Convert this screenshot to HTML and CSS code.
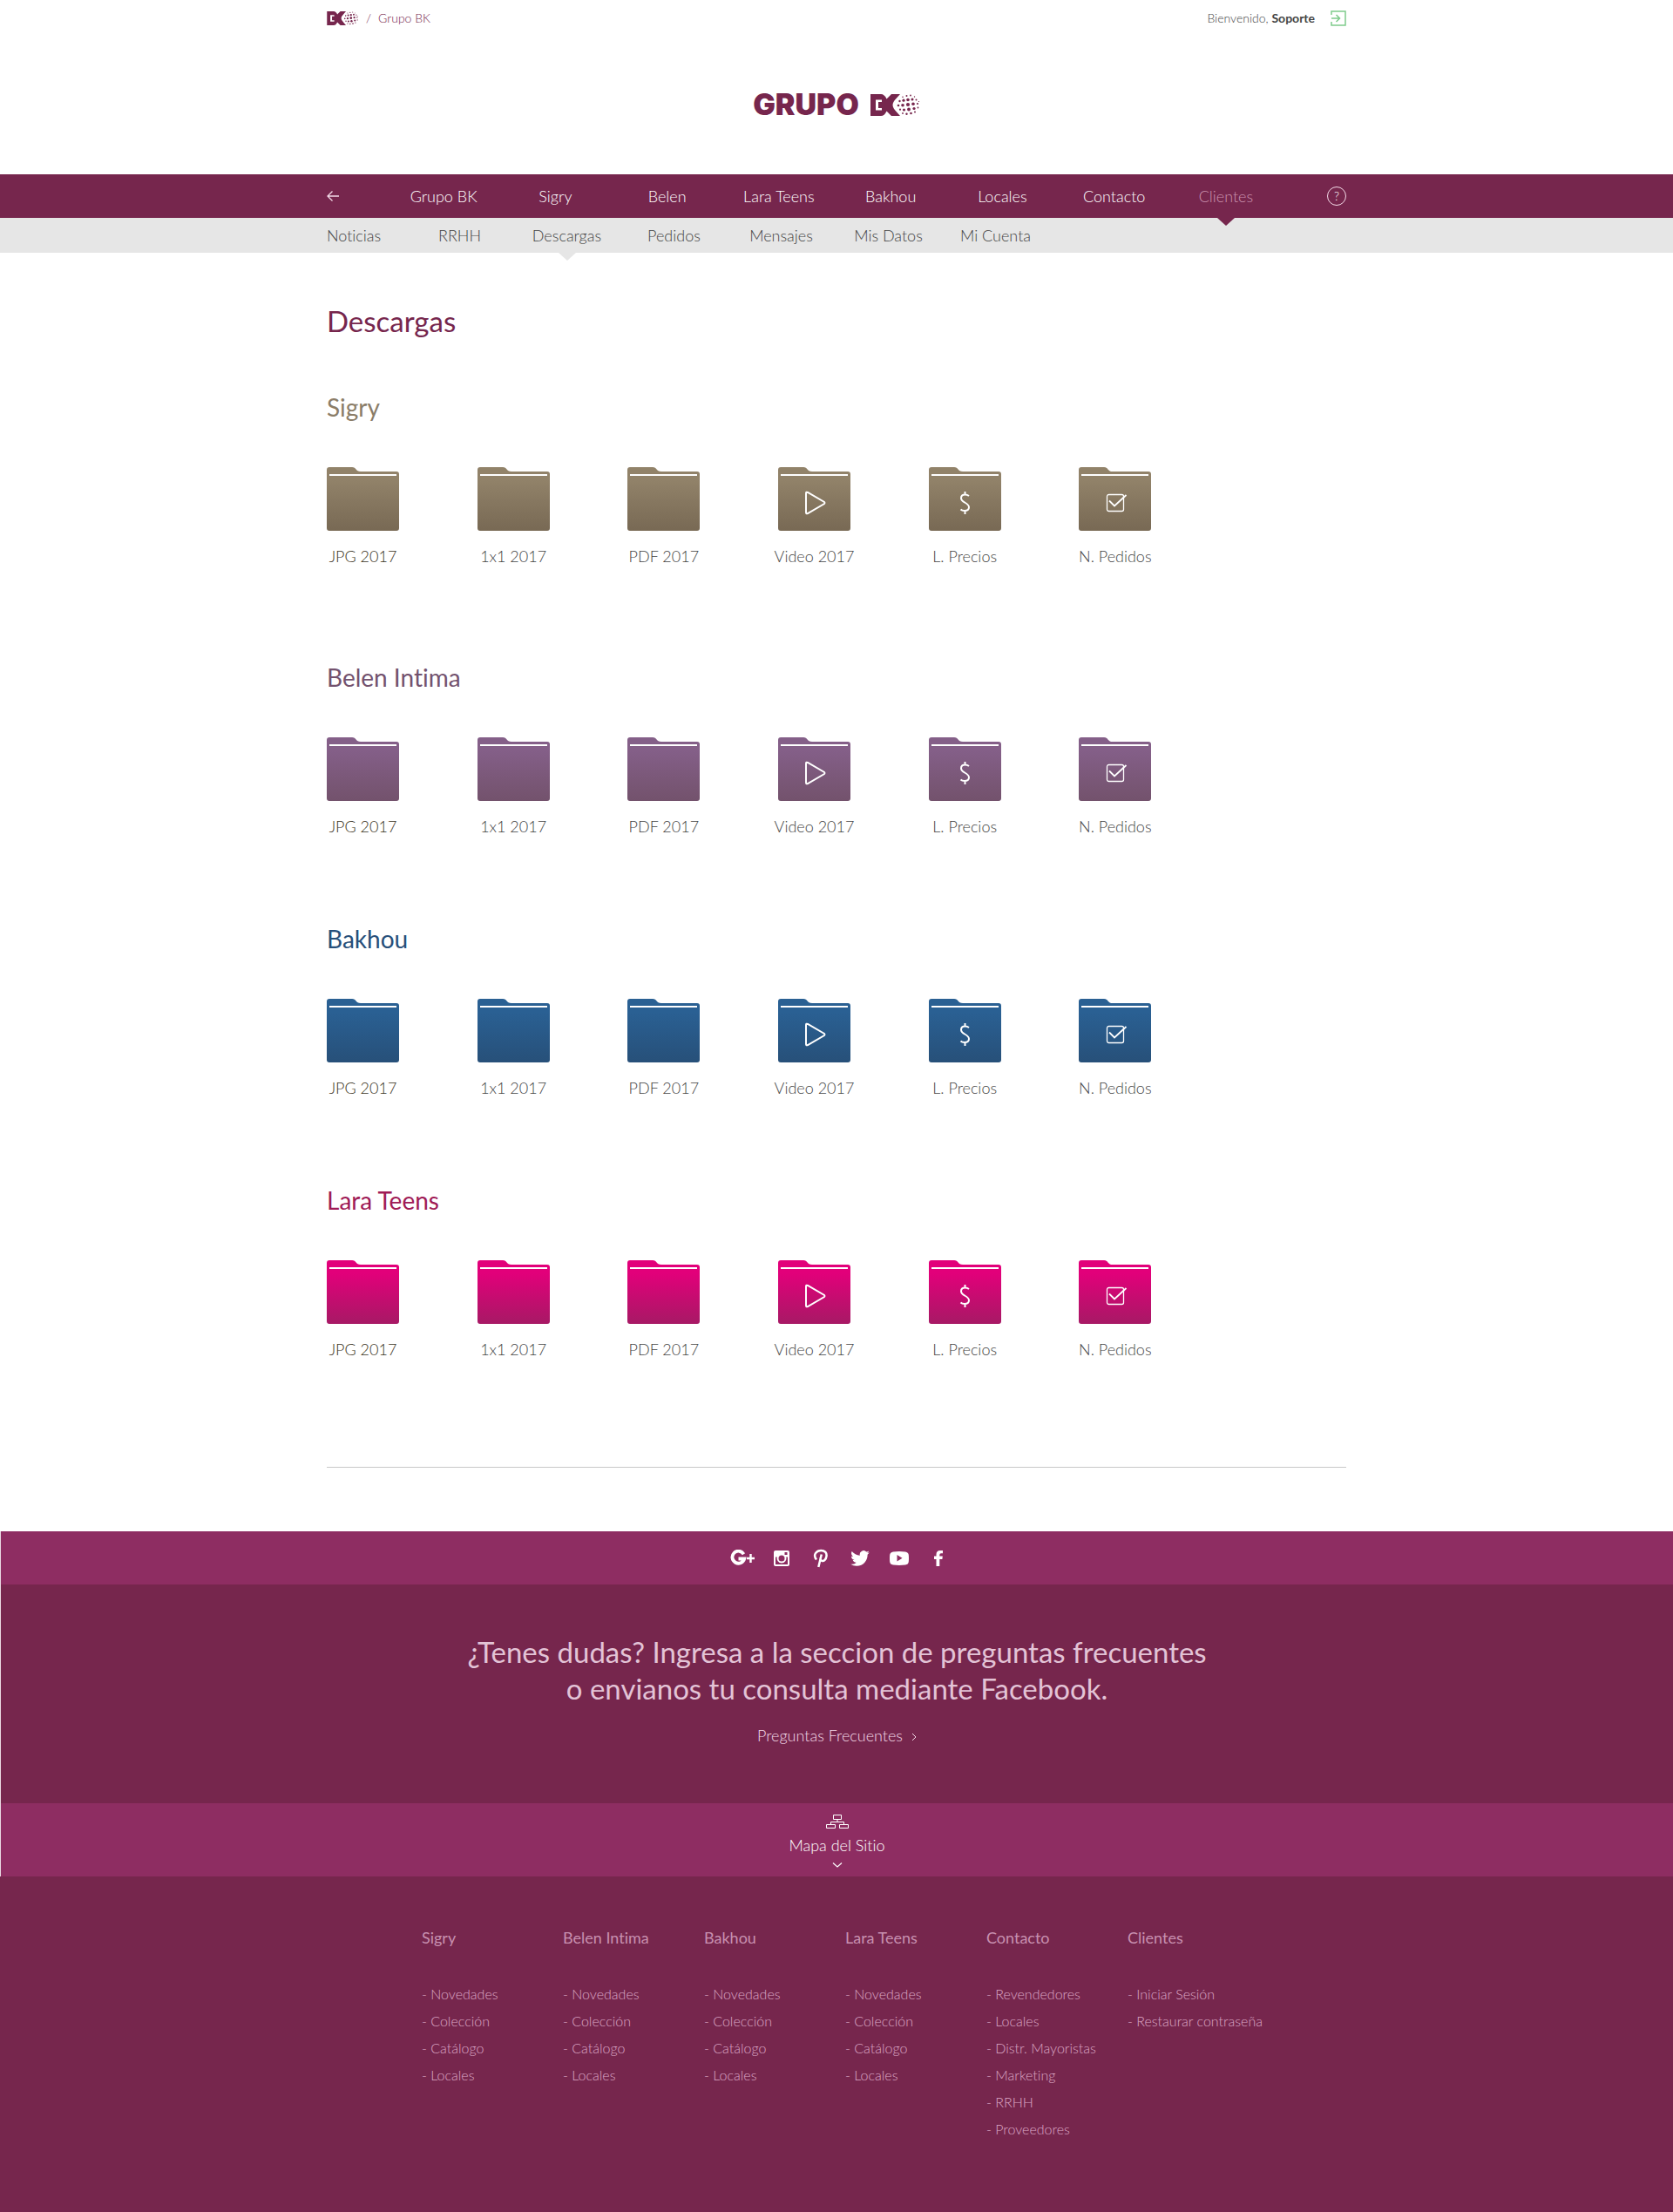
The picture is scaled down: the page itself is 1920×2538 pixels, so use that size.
FILE: index.html
```html
<!DOCTYPE html>
<html lang="es">
<head>
<meta charset="utf-8">
<meta name="viewport" content="width=device-width, initial-scale=1">
<title>Descargas - Grupo BK</title>
<link rel="stylesheet" href="styles.css">
</head>
<body>
<svg class="defs" width="0" height="0" aria-hidden="true">
  <defs>
    <linearGradient id="g-sigry" x1="0" y1="0" x2="0" y2="1"><stop offset="0.2" stop-color="#918269"/><stop offset="1" stop-color="#786954"/></linearGradient>
    <linearGradient id="g-belen" x1="0" y1="0" x2="0" y2="1"><stop offset="0.2" stop-color="#845f88"/><stop offset="1" stop-color="#73526c"/></linearGradient>
    <linearGradient id="g-bakhou" x1="0" y1="0" x2="0" y2="1"><stop offset="0.2" stop-color="#2a6093"/><stop offset="1" stop-color="#275079"/></linearGradient>
    <linearGradient id="g-lara" x1="0" y1="0" x2="0" y2="1"><stop offset="0.2" stop-color="#e2007a"/><stop offset="1" stop-color="#a71965"/></linearGradient>
  </defs>
  <symbol id="folder" viewBox="0 0 83 73">
    <path d="M3 0H29C34 0 33 5 39 5H80Q83 5 83 8V70Q83 73 80 73H3Q0 73 0 70V3Q0 0 3 0Z"/>
    <path d="M3 8H80V10H3Z" fill="#fff"/>
  </symbol>
  <symbol id="play" viewBox="0 0 83 73">
    <path d="M32 30V52Q32 54 34 53L53 42Q54 41 53 40L34 29Q32 28 32 30Z" fill="none" stroke="#fff" stroke-width="2"/>
  </symbol>
  <symbol id="dollar" viewBox="0 0 83 73">
    <path d="M46 33Q44 31.500 41.500 31.500Q37 31.500 37 35.500C37 41 46 40.500 46 46Q46 50 41 50Q38 50 36.500 48.500M41.500 28V31.500M41.500 50V54" fill="none" stroke="#fff" stroke-width="2"/>
  </symbol>
  <symbol id="check" viewBox="0 0 83 73">
    <rect x="32.500" y="31.500" width="19" height="19" rx="2" fill="none" stroke="#fff" stroke-width="1.300"/>
    <path d="M35 38.500L41 44.500L54.500 32" fill="none" stroke="#fff" stroke-width="1.800"/>
  </symbol>
  <symbol id="bk" viewBox="0 0 57 25">
    <path d="M0 0H12Q16 0 18.500 5.500L24 0H34L30 4.500Q25.500 9 25.500 12.500Q25.500 16 30 20.500L34 25H24L18.500 19.500Q16 25 12 25H0Z"/>
    <path d="M6 6.500H13V9H9V16H13V18.500H6Z" fill="#fff"/>
    <circle cx="37" cy="3.200" r="0.800"/><circle cx="41.500" cy="2" r="1"/><circle cx="46" cy="1.500" r="0.900"/><circle cx="50.500" cy="3" r="0.700"/>
    <circle cx="33.500" cy="8" r="1.200"/><circle cx="38" cy="7.200" r="1.600"/><circle cx="43" cy="6.500" r="1.800"/><circle cx="48" cy="5.900" r="1.500"/><circle cx="52.500" cy="6.500" r="1"/><circle cx="55.500" cy="8.500" r="0.600"/>
    <circle cx="32" cy="13" r="1.300"/><circle cx="37" cy="12.700" r="1.800"/><circle cx="43" cy="12" r="2.100"/><circle cx="49" cy="11.200" r="1.800"/><circle cx="54" cy="11" r="1.100"/>
    <circle cx="34" cy="17.700" r="1.100"/><circle cx="38.500" cy="18" r="1.600"/><circle cx="44" cy="17.500" r="1.900"/><circle cx="50" cy="16.500" r="1.600"/><circle cx="54.500" cy="15.500" r="0.900"/>
    <circle cx="37" cy="22" r="0.900"/><circle cx="41.500" cy="22.700" r="1.200"/><circle cx="46.500" cy="22" r="1.300"/><circle cx="51" cy="20.500" r="1"/>
  </symbol>
</svg>

<header>
  <div class="container topbar">
    <nav class="crumbs" aria-label="Ruta">
      <a href="#" aria-label="BK"><svg class="bk-small"><use href="#bk"/></svg></a>
      <span>/</span>
      <a href="#">Grupo BK</a>
    </nav>
    <div class="user">
      <span>Bienvenido, <strong>Soporte</strong></span>
      <button class="icon-btn" type="button" aria-label="Salir">
        <svg width="18" height="18" viewBox="0 0 18 18" fill="none" stroke="#7fcb8c" stroke-width="1.500"><path d="M1 5V1H17V17H1V13M1 9H10M6.500 5L10.500 9L6.500 13"/></svg>
      </button>
    </div>
  </div>
  <a class="brand" href="#"><span>GRUPO</span><svg class="bk-big" role="img" aria-label="BK"><use href="#bk"/></svg></a>
  <nav class="mainnav" aria-label="Principal">
    <div class="container mainnav-grid">
      <button class="icon-btn back" type="button" aria-label="Volver"><svg width="14" height="12" viewBox="0 0 14 12" fill="none" stroke="#f3d9e7" stroke-width="1.300"><path d="M14 6H1M6.500 0.500L1 6L6.500 11.500"/></svg></button>
      <a href="#">Grupo BK</a>
      <a href="#">Sigry</a>
      <a href="#">Belen</a>
      <a href="#">Lara Teens</a>
      <a href="#">Bakhou</a>
      <a href="#">Locales</a>
      <a href="#">Contacto</a>
      <a class="current" href="#">Clientes</a>
      <button class="icon-btn help" type="button" aria-label="Ayuda"><span>?</span></button>
    </div>
  </nav>
  <nav class="subnav" aria-label="Clientes">
    <div class="container subnav-grid">
      <a href="#">Noticias</a>
      <a href="#">RRHH</a>
      <a class="current" href="#">Descargas</a>
      <a href="#">Pedidos</a>
      <a href="#">Mensajes</a>
      <a href="#">Mis Datos</a>
      <a href="#">Mi Cuenta</a>
    </div>
  </nav>
</header>

<main class="container">
  <h1>Descargas</h1>

  <section class="brand-group sigry">
    <h2>Sigry</h2>
    <ul class="folders">
      <li><a class="first" href="#"><svg fill="url(#g-sigry)"><use href="#folder"/></svg><span>JPG 2017</span></a></li>
      <li><a href="#"><svg fill="url(#g-sigry)"><use href="#folder"/></svg><span>1x1 2017</span></a></li>
      <li><a href="#"><svg fill="url(#g-sigry)"><use href="#folder"/></svg><span>PDF 2017</span></a></li>
      <li><a href="#"><svg fill="url(#g-sigry)"><use href="#folder"/><use href="#play"/></svg><span>Video 2017</span></a></li>
      <li><a href="#"><svg fill="url(#g-sigry)"><use href="#folder"/><use href="#dollar"/></svg><span>L. Precios</span></a></li>
      <li><a href="#"><svg fill="url(#g-sigry)"><use href="#folder"/><use href="#check"/></svg><span>N. Pedidos</span></a></li>
    </ul>
  </section>

  <section class="brand-group belen">
    <h2>Belen Intima</h2>
    <ul class="folders">
      <li><a class="first" href="#"><svg fill="url(#g-belen)"><use href="#folder"/></svg><span>JPG 2017</span></a></li>
      <li><a href="#"><svg fill="url(#g-belen)"><use href="#folder"/></svg><span>1x1 2017</span></a></li>
      <li><a href="#"><svg fill="url(#g-belen)"><use href="#folder"/></svg><span>PDF 2017</span></a></li>
      <li><a href="#"><svg fill="url(#g-belen)"><use href="#folder"/><use href="#play"/></svg><span>Video 2017</span></a></li>
      <li><a href="#"><svg fill="url(#g-belen)"><use href="#folder"/><use href="#dollar"/></svg><span>L. Precios</span></a></li>
      <li><a href="#"><svg fill="url(#g-belen)"><use href="#folder"/><use href="#check"/></svg><span>N. Pedidos</span></a></li>
    </ul>
  </section>

  <section class="brand-group bakhou">
    <h2>Bakhou</h2>
    <ul class="folders">
      <li><a class="first" href="#"><svg fill="url(#g-bakhou)"><use href="#folder"/></svg><span>JPG 2017</span></a></li>
      <li><a href="#"><svg fill="url(#g-bakhou)"><use href="#folder"/></svg><span>1x1 2017</span></a></li>
      <li><a href="#"><svg fill="url(#g-bakhou)"><use href="#folder"/></svg><span>PDF 2017</span></a></li>
      <li><a href="#"><svg fill="url(#g-bakhou)"><use href="#folder"/><use href="#play"/></svg><span>Video 2017</span></a></li>
      <li><a href="#"><svg fill="url(#g-bakhou)"><use href="#folder"/><use href="#dollar"/></svg><span>L. Precios</span></a></li>
      <li><a href="#"><svg fill="url(#g-bakhou)"><use href="#folder"/><use href="#check"/></svg><span>N. Pedidos</span></a></li>
    </ul>
  </section>

  <section class="brand-group lara">
    <h2>Lara Teens</h2>
    <ul class="folders">
      <li><a class="first" href="#"><svg fill="url(#g-lara)"><use href="#folder"/></svg><span>JPG 2017</span></a></li>
      <li><a href="#"><svg fill="url(#g-lara)"><use href="#folder"/></svg><span>1x1 2017</span></a></li>
      <li><a href="#"><svg fill="url(#g-lara)"><use href="#folder"/></svg><span>PDF 2017</span></a></li>
      <li><a href="#"><svg fill="url(#g-lara)"><use href="#folder"/><use href="#play"/></svg><span>Video 2017</span></a></li>
      <li><a href="#"><svg fill="url(#g-lara)"><use href="#folder"/><use href="#dollar"/></svg><span>L. Precios</span></a></li>
      <li><a href="#"><svg fill="url(#g-lara)"><use href="#folder"/><use href="#check"/></svg><span>N. Pedidos</span></a></li>
    </ul>
  </section>
  <hr>
</main>

<footer>
  <div class="social">
    <div class="social-grid">
      <a href="#" aria-label="Google+"><svg width="28" height="20" viewBox="0 0 28 20"><path d="M15.500 5.200A7 7 0 1 0 16.200 10.500H9.500" fill="none" stroke="#fff" stroke-width="3.800"/><path d="M22.300 5H24.700V8.800H28V11.200H24.700V15H22.300V11.200H19V8.800H22.300Z" fill="#fff"/></svg></a>
      <a href="#" aria-label="Instagram"><svg width="20" height="20" viewBox="0 0 20 20"><path fill="#fff" fill-rule="evenodd" d="M3 1H17Q19 1 19 3V17Q19 19 17 19H3Q1 19 1 17V3Q1 1 3 1ZM13.500 3V6H16.500V3ZM3 8.500V17H17V8.500H15.300A5.500 5.500 0 1 1 4.700 8.500ZM10 6.500A3.500 3.500 0 1 0 10 13.500A3.500 3.500 0 1 0 10 6.500Z"/></svg></a>
      <a href="#" aria-label="Pinterest"><svg width="18" height="22" viewBox="0 0 18 22"><path d="M4 12.500C-0.500 7 4 2 9.200 2C14 2 16 5 15.500 8.500C15 12.500 12.500 14.500 10.500 14C8.500 13.500 8.300 12 8.800 10.500M9.800 6.500L6.300 21" fill="none" stroke="#fff" stroke-width="2.500"/></svg></a>
      <a href="#" aria-label="Twitter"><svg width="22" height="18" viewBox="0 0 24 20"><path fill="#fff" d="M23.950 2.570a10 10 0 0 1-2.820.77 4.960 4.960 0 0 0 2.160-2.720c-.95.550-2 .950-3.130 1.180a4.920 4.920 0 0 0-8.380 4.480C7.690 6.090 4.070 4.130 1.640 1.160a4.820 4.820 0 0 0-.67 2.470c0 1.710.87 3.210 2.190 4.100a4.900 4.900 0 0 1-2.230-.62v.06a4.920 4.920 0 0 0 3.950 4.830 5 5 0 0 1-2.210.08 4.940 4.940 0 0 0 4.600 3.420A9.870 9.870 0 0 1 0 17.540a13.990 13.990 0 0 0 7.560 2.210c9.050 0 14-7.500 14-13.980 0-.21 0-.42-.02-.63a9.940 9.940 0 0 0 2.410-2.570Z"/></svg></a>
      <a href="#" aria-label="YouTube"><svg width="22" height="16" viewBox="0 0 22 16"><path fill="#fff" fill-rule="evenodd" d="M4 0.500Q11 -0.300 18 0.500Q21.500 1 21.800 4Q22.200 8 21.800 12Q21.500 15 18 15.500Q11 16.300 4 15.500Q0.500 15 0.200 12Q-0.200 8 0.200 4Q0.500 1 4 0.500ZM8.500 4V11.500L14.500 7.700Z"/></svg></a>
      <a href="#" aria-label="Facebook"><svg width="10" height="18" viewBox="0 0 10 18"><path fill="#fff" d="M2.500 18V10H0V6.500H2.500V4.500Q2.500 0 7 0H10V3.300H8Q6.300 3.300 6.300 5V6.500H9.800L9.400 10H6.300V18Z"/></svg></a>
    </div>
  </div>
  <section class="faq">
    <p>¿Tenes dudas? Ingresa a la seccion de preguntas frecuentes<br>o envianos tu consulta mediante Facebook.</p>
    <a href="#">Preguntas Frecuentes <svg width="6" height="10" viewBox="0 0 6 10" fill="none" stroke="currentColor"><path d="M1 1L5 5L1 9"/></svg></a>
  </section>
  <button class="sitemap-toggle" type="button">
    <svg width="26" height="16" viewBox="0 0 26 16" fill="none" stroke="currentColor"><path d="M8.500 0.500H17.500V5.500H8.500ZM0.500 11.500H10.500V15.500H0.500ZM15.500 11.500H25.500V15.500H15.500ZM13 5.500V8.500M5.500 11.500V8.500H20.500V11.500"/></svg>
    <span>Mapa del Sitio</span>
    <svg width="12" height="6" viewBox="0 0 12 6" fill="none" stroke="currentColor" stroke-width="1.200"><path d="M1 0.500L6 5L11 0.500"/></svg>
  </button>
  <nav class="sitemap" aria-label="Mapa del sitio">
    <div><h3>Sigry</h3><ul><li><a href="#">Novedades</a></li><li><a href="#">Colección</a></li><li><a href="#">Catálogo</a></li><li><a href="#">Locales</a></li></ul></div>
    <div><h3>Belen Intima</h3><ul><li><a href="#">Novedades</a></li><li><a href="#">Colección</a></li><li><a href="#">Catálogo</a></li><li><a href="#">Locales</a></li></ul></div>
    <div><h3>Bakhou</h3><ul><li><a href="#">Novedades</a></li><li><a href="#">Colección</a></li><li><a href="#">Catálogo</a></li><li><a href="#">Locales</a></li></ul></div>
    <div><h3>Lara Teens</h3><ul><li><a href="#">Novedades</a></li><li><a href="#">Colección</a></li><li><a href="#">Catálogo</a></li><li><a href="#">Locales</a></li></ul></div>
    <div><h3>Contacto</h3><ul><li><a href="#">Revendedores</a></li><li><a href="#">Locales</a></li><li><a href="#">Distr. Mayoristas</a></li><li><a href="#">Marketing</a></li><li><a href="#">RRHH</a></li><li><a href="#">Proveedores</a></li></ul></div>
    <div><h3>Clientes</h3><ul><li><a href="#">Iniciar Sesión</a></li><li><a href="#">Restaurar contraseña</a></li></ul></div>
  </nav>
</footer>
</body>
</html>
```

FILE: styles.css
```css
:root {
  --plum: #76264d;
  --plum-light: #8e2d62;
}

* {
  box-sizing: border-box;
}

body {
  margin: 0;
  background: #fff;
  color: #444;
  font: 300 18px/24px "Lato", "Open Sans", sans-serif;
  font-variant-ligatures: none;
}

a {
  color: inherit;
  text-decoration: none;
}

ul {
  list-style: none;
  margin: 0;
  padding: 0;
}

h1,
h2,
h3,
p {
  margin: 0;
  font-weight: 400;
}

.defs {
  position: absolute;
}

.container {
  max-width: 1170px;
  margin: 0 auto;
}

.icon-btn {
  display: flex;
  align-items: center;
  padding: 0;
  border: 0;
  background: none;
  color: inherit;
  font: inherit;
  cursor: pointer;
}

/* Top bar */
.topbar {
  display: flex;
  justify-content: space-between;
  align-items: center;
  height: 42px;
  font-size: 14px;
}

.crumbs,
.crumbs a,
.user {
  display: flex;
  align-items: center;
}

.crumbs {
  gap: 8px;
  color: var(--plum);
}

.user {
  gap: 18px;
}

.user strong {
  font-weight: 700;
}

.bk-small {
  width: 37px;
  height: 16px;
  fill: var(--plum);
}

.brand {
  display: flex;
  justify-content: center;
  align-items: center;
  gap: 13px;
  padding: 60px 0 62px;
  color: var(--plum);
  font: 900 34px/36px "Inter", sans-serif;
}

.bk-big {
  width: 57px;
  height: 25px;
  fill: var(--plum);
}

/* Navigation */
.mainnav {
  background: var(--plum);
  color: #fff;
}

.mainnav-grid {
  display: grid;
  grid-template-columns: 70px repeat(8, 1fr) 74px;
  line-height: 50px;
  text-align: center;
}

.mainnav .current {
  position: relative;
  color: #cb93af;
}

.current::after {
  content: "";
  position: absolute;
  top: 100%;
  left: 50%;
  border: solid transparent;
  border-width: 9px 10px 0;
  margin-left: -10px;
}

.mainnav .current::after {
  border-top-color: var(--plum);
}

.help {
  justify-content: flex-end;
}

.help span {
  width: 22px;
  height: 22px;
  border: 1px solid #f3d9e7;
  border-radius: 50%;
  font-size: 14px;
  line-height: 20px;
}

.subnav {
  background: #e6e6e6;
}

.subnav-grid {
  display: grid;
  grid-template-columns: 91px repeat(6, 123px);
  line-height: 40px;
  text-align: center;
}

.subnav a:first-child {
  text-align: left;
}

.subnav .current {
  position: relative;
}

.subnav .current::after {
  border-top-color: #e6e6e6;
}

/* Downloads */
h1 {
  padding-top: 58px;
  margin-bottom: 61px;
  color: var(--plum);
  font-size: 33px;
  line-height: 40px;
}

.brand-group {
  margin-bottom: 99px;
}

.brand-group h2 {
  margin-bottom: 51px;
  font-size: 28px;
  line-height: 36px;
}

.sigry {
  margin-bottom: 109px;
}

.sigry h2 {
  color: #8b7d68;
}

.belen h2 {
  color: #73526e;
}

.bakhou h2 {
  color: #274f7a;
}

.lara h2 {
  color: #a01b56;
}

.folders {
  display: grid;
  grid-template-columns: repeat(6, 1fr);
  max-width: 1036px;
}

.folders a {
  display: flex;
  flex-direction: column;
  align-items: center;
  gap: 17px;
  width: 83px;
  white-space: nowrap;
}

.folders svg {
  width: 83px;
  height: 73px;
}

.folders .first {
  color: #3a3322;
}

hr {
  height: 1px;
  margin: 123px 0 73px;
  border: 0;
  background: #c8c8c8;
}

/* Footer */
footer {
  background: var(--plum);
}

.social,
.faq,
.sitemap-toggle {
  border: 0;
  border-left: 1px solid #e9d8e1;
}

.social {
  padding: 1px 0 0 8px;
  background: var(--plum-light);
}

.social-grid {
  display: grid;
  grid-template-columns: repeat(6, 45px);
  justify-content: center;
}

.social a {
  display: flex;
  justify-content: center;
  align-items: center;
  height: 60px;
}

.faq {
  padding: 56px 0 66px;
  color: #e3c3d6;
  text-align: center;
}

.faq p {
  margin-bottom: 21px;
  font-size: 33px;
  line-height: 42px;
}

.faq a {
  display: flex;
  justify-content: center;
  align-items: center;
  gap: 10px;
  color: #f3d9e8;
}

.faq a svg {
  margin-top: 4px;
}

.sitemap-toggle {
  display: flex;
  flex-direction: column;
  align-items: center;
  width: 100%;
  padding: 13px 0 10px;
  background: var(--plum-light);
  color: #fff;
  font: inherit;
  cursor: pointer;
}

.sitemap-toggle span {
  margin: 7px 0 8px;
}

.sitemap {
  display: grid;
  grid-template-columns: repeat(5, minmax(0, 162fr)) minmax(0, 142fr);
  max-width: 952px;
  margin: 0 auto;
  padding: 58px 0 80px;
  color: #dba6c5;
  white-space: nowrap;
}

.sitemap h3 {
  margin-bottom: 37px;
  color: #c890b0;
  font-size: 18px;
  line-height: 24px;
}

.sitemap li {
  font-size: 16px;
  line-height: 31px;
}

.sitemap li::before {
  content: "- ";
}
```
